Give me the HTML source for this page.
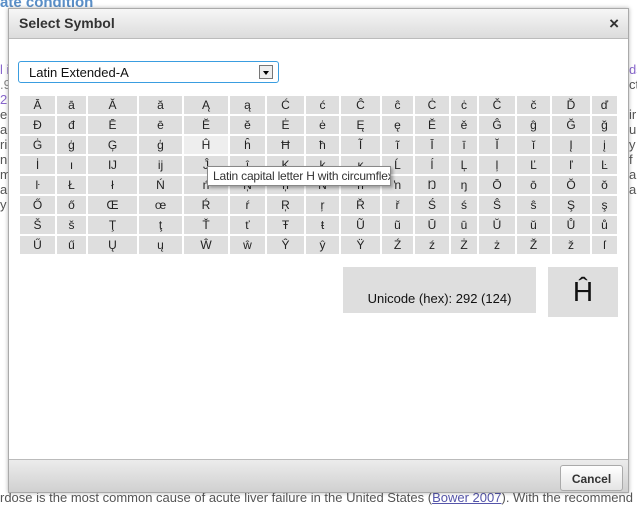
<!DOCTYPE html>
<html><head><meta charset="utf-8"><style>
body{margin:0;width:637px;height:505px;overflow:hidden;background:#fff;font-family:"Liberation Sans",sans-serif;position:relative}
.bg{position:absolute;font-size:13px;color:#555;white-space:nowrap}
.dlg{position:absolute;left:8px;top:8px;width:619px;height:483px;border:1px solid #aaa;background:#fff;box-shadow:0 0 4px rgba(0,0,0,.3)}
.tb{height:29px;background:linear-gradient(#f6f6f6,#dcdcdc);border-bottom:1px solid #bbb;font-weight:bold;font-size:14px;color:#333;line-height:29px;padding-left:10px;position:relative}
.x{position:absolute;right:9px;top:0;font-size:17px;color:#333}
.sel{position:absolute;left:9px;top:52px;height:22px;border:1px solid #3a9de0;border-radius:3px;font-size:13px;line-height:22px;padding-left:10px;box-sizing:border-box;width:261px;color:#111}
.arr{position:absolute;right:5px;top:3px;width:14px;height:14px;border:1px solid #777;background:#eee;box-sizing:border-box}
.arr:after{content:"";position:absolute;left:3px;top:5px;border-left:3.5px solid transparent;border-right:3.5px solid transparent;border-top:4px solid #000}
table{position:absolute;left:9px;top:85px;border-collapse:separate;border-spacing:2px;}
td{background:#dedede;height:18px;text-align:center;font-size:12px;padding:0;color:#222}
td.h{background:#eee}
.tip{position:absolute;left:198px;top:157px;height:20px;width:184px;border:1px solid #888;background:#fff;font-size:12px;line-height:19px;padding-left:5px;box-sizing:border-box;box-shadow:2px 2px 3px rgba(0,0,0,.3);color:#333;white-space:nowrap;overflow:hidden;letter-spacing:-0.2px}
.uc{position:absolute;left:334px;top:258px;width:193px;height:46px;background:#dedede;font-size:13px;text-align:center;line-height:16px;box-sizing:border-box;padding-top:24px;color:#111}
.pv{position:absolute;left:539px;top:258px;width:70px;height:50px;background:#dedede;font-size:28px;text-align:center;line-height:50px;color:#111}
.ft{position:absolute;left:0;bottom:0;width:100%;height:32px;background:linear-gradient(#ececec,#d0d0d0);border-top:1px solid #bbb}
.btn{position:absolute;right:5px;top:5px;width:63px;height:26px;border:1px solid #aaa;border-radius:3px;background:linear-gradient(#fff,#e4e4e4);font-size:12px;font-weight:bold;color:#333;text-align:center;line-height:26px;box-sizing:border-box}
</style></head><body>
<div class="bg" style="left:0;top:-6px;color:#5a8fc8;font-weight:bold;font-size:15px">ate condition</div>
<div class="bg" style="left:0;top:490px">rdose is the most common cause of acute liver failure in the United States (<span style="color:#55a;text-decoration:underline">Bower 2007</span>). With the recommend</div>
<div class="bg" style="left:0;top:62px;color:#86c">l i<br><span style="color:#888">.9</span><br>2<br><span style="color:#555">e<br>ar<br>ri<br>n<br>m<br>a<br>y</span></div>
<div class="bg" style="left:629px;top:62px;color:#86c">ds<br><span style="color:#555">ct<br><br>ir<br>u<br>y<br>f<br>a<br>a</span></div>
<div class="dlg">
<div class="tb">Select Symbol<span class="x">×</span></div>
<div class="sel">Latin Extended-A<div class="arr"></div></div>
<table>
<colgroup><col width="35"><col width="29"><col width="49"><col width="43"><col width="44"><col width="35"><col width="37"><col width="33"><col width="39"><col width="31"><col width="34"><col width="26"><col width="36"><col width="33"><col width="38"><col width="25"></colgroup>
<tr><td>Ā</td><td>ā</td><td>Ă</td><td>ă</td><td>Ą</td><td>ą</td><td>Ć</td><td>ć</td><td>Ĉ</td><td>ĉ</td><td>Ċ</td><td>ċ</td><td>Č</td><td>č</td><td>Ď</td><td>ď</td></tr>
<tr><td>Đ</td><td>đ</td><td>Ē</td><td>ē</td><td>Ĕ</td><td>ĕ</td><td>Ė</td><td>ė</td><td>Ę</td><td>ę</td><td>Ě</td><td>ě</td><td>Ĝ</td><td>ĝ</td><td>Ğ</td><td>ğ</td></tr>
<tr><td>Ġ</td><td>ġ</td><td>Ģ</td><td>ģ</td><td class="h">Ĥ</td><td>ĥ</td><td>Ħ</td><td>ħ</td><td>Ĩ</td><td>ĩ</td><td>Ī</td><td>ī</td><td>Ĭ</td><td>ĭ</td><td>Į</td><td>į</td></tr>
<tr><td>İ</td><td>ı</td><td>Ĳ</td><td>ĳ</td><td>Ĵ</td><td>ĵ</td><td>Ķ</td><td>ķ</td><td>ĸ</td><td>Ĺ</td><td>ĺ</td><td>Ļ</td><td>ļ</td><td>Ľ</td><td>ľ</td><td>Ŀ</td></tr>
<tr><td>ŀ</td><td>Ł</td><td>ł</td><td>Ń</td><td>ń</td><td>Ņ</td><td>ņ</td><td>Ň</td><td>ň</td><td>ŉ</td><td>Ŋ</td><td>ŋ</td><td>Ō</td><td>ō</td><td>Ŏ</td><td>ŏ</td></tr>
<tr><td>Ő</td><td>ő</td><td>Œ</td><td>œ</td><td>Ŕ</td><td>ŕ</td><td>Ŗ</td><td>ŗ</td><td>Ř</td><td>ř</td><td>Ś</td><td>ś</td><td>Ŝ</td><td>ŝ</td><td>Ş</td><td>ş</td></tr>
<tr><td>Š</td><td>š</td><td>Ţ</td><td>ţ</td><td>Ť</td><td>ť</td><td>Ŧ</td><td>ŧ</td><td>Ũ</td><td>ũ</td><td>Ū</td><td>ū</td><td>Ŭ</td><td>ŭ</td><td>Ů</td><td>ů</td></tr>
<tr><td>Ű</td><td>ű</td><td>Ų</td><td>ų</td><td>Ŵ</td><td>ŵ</td><td>Ŷ</td><td>ŷ</td><td>Ÿ</td><td>Ź</td><td>ź</td><td>Ż</td><td>ż</td><td>Ž</td><td>ž</td><td>ſ</td></tr>
</table>
<div class="tip">Latin capital letter H with circumflex</div>
<div class="uc">Unicode (hex): 292 (124)</div>
<div class="pv">Ĥ</div>
<div class="ft"><div class="btn">Cancel</div></div>
</div>
</body></html>
